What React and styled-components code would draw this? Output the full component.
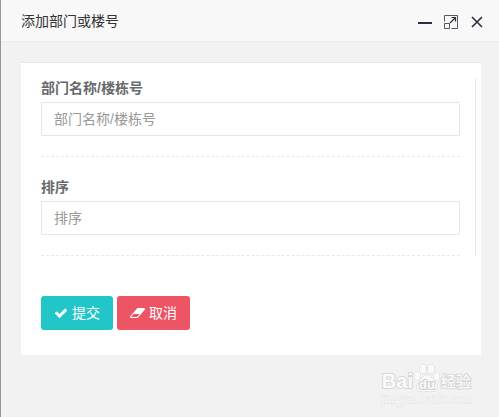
import React from "react";
import styled, { createGlobalStyle } from "styled-components";

const GlobalStyle = createGlobalStyle`
  *, *::before, *::after { box-sizing: border-box; }
  html { background: #f2f2f2; }
  body {
    margin: 0;
    font: 14px/20px "Liberation Sans", "Noto Sans CJK SC", sans-serif;
    color: #676a6c;
  }
`;

const Dialog = styled.main`
  position: relative;
  min-height: 100vh;
  border-left: 1px solid #999;
  background: #f2f2f2;
`;

const TitleBar = styled.header`
  display: flex;
  align-items: center;
  justify-content: space-between;
  height: 42px;
  padding: 0 14px 0 20px;
  background: #f8f8f8;
  border-bottom: 1px solid #eee;
`;

const Title = styled.h1`
  margin: 0;
  font-size: 14px;
  font-weight: 400;
  color: #333;
`;

const WindowControls = styled.div`
  display: flex;
  gap: 10px;
  padding-top: 2px;
`;

const WindowButton = styled.button`
  display: flex;
  padding: 0;
  border: 0;
  background: none;
  color: #2e2d3c;
  cursor: pointer;
`;

const Card = styled.form`
  margin: 20px 18px 0 20px;
  padding: 15px 5px 25px 20px;
  background: #fff;
  border-top: 1px solid #e7eaec;
`;

const Fields = styled.div`
  padding-right: 15px;
  border-right: 1px solid #e7e7e7;
`;

const Field = styled.div`
  display: flex;
  flex-direction: column;
  gap: 4px;
  padding-bottom: 20px;
  border-bottom: 1px dashed #e7eaec;

  & + & { padding-top: 20px; }
`;

const Label = styled.label`
  font-weight: 700;
`;

const TextInput = styled.input`
  width: 100%;
  height: 34px;
  padding: 6px 12px;
  border: 1px solid #e5e6e7;
  border-radius: 1px;
  background: #fff;
  font: inherit;
  color: inherit;

  &::placeholder { color: #999; opacity: 1; }
`;

const Actions = styled.div`
  display: flex;
  gap: 4px;
  margin-top: 40px;
`;

const ActionButton = styled.button`
  display: flex;
  align-items: center;
  gap: 4px;
  height: 34px;
  padding: 0 13px;
  border: 0;
  border-radius: 3px;
  background: ${({ $color }) => $color};
  color: #fff;
  font: inherit;
  cursor: pointer;
`;

const Watermark = styled.div`
  position: absolute;
  right: 28px;
  bottom: 12px;
  color: #fafafa;
  -webkit-text-stroke: 2px #d8d8d8;
  paint-order: stroke fill;
`;

const WatermarkBrand = styled.div`
  display: flex;
  align-items: flex-end;
  justify-content: flex-end;
  height: 31px;
  font: 700 20px/24px "Liberation Sans", sans-serif;
`;

const WatermarkName = styled.span`
  font: 500 15px/24px "Noto Sans CJK SC", sans-serif;
`;

const WatermarkUrl = styled.div`
  font: 12px/12px "Liberation Serif", serif;
  text-align: right;
  -webkit-text-stroke: 1px #e4e4e4;
`;

const PawText = styled.text`
  font: 700 13px "Liberation Sans", sans-serif;
  fill: #fafafa;
  stroke: #d0d0d0;
  stroke-width: 2px;
`;

const MinimizeIcon = () => (
  <svg width="16" height="16" viewBox="0 0 16 16" aria-hidden="true">
    <path d="M1 8h14v2H1z" fill="currentColor" />
  </svg>
);

const MaximizeIcon = () => (
  <svg width="16" height="16" viewBox="0 0 16 16" fill="none" stroke="currentColor" aria-hidden="true">
    <path d="M1.5 7.5v-6h13v13h-6M1.5 9.5h5v5h-5z" strokeOpacity="0.8" />
    <path d="M7 9l5.500-5.500M8.500 3.500h4v4" strokeWidth="1.200" />
  </svg>
);

const CloseIcon = () => (
  <svg width="16" height="16" viewBox="0 0 16 16" fill="none" stroke="currentColor" strokeWidth="1.600" aria-hidden="true">
    <path d="M3 3l10 10M13 3L3 13" />
  </svg>
);

const CheckIcon = () => (
  <svg width="14" height="14" viewBox="0 0 1792 1792" fill="currentColor" aria-hidden="true">
    <path d="M1671 566q0 40-28 68l-724 724-136 136q-28 28-68 28t-68-28l-136-136-362-362q-28-28-28-68t28-68l136-136q28-28 68-28t68 28l294 295 656-657q28-28 68-28t68 28l136 136q28 28 28 68z" />
  </svg>
);

const EraserIcon = () => (
  <svg width="15" height="14" viewBox="64 0 1920 1792" fill="currentColor" aria-hidden="true">
    <path d="M960 1408l336-384h-768l-336 384h768zm1013-1077q15 34 9.5 71.5t-30.5 65.5l-896 1024q-38 44-96 44h-768q-38 0-69.5-20.5t-47.5-54.5q-15-34-9.5-71.5t30.5-65.5l896-1024q38-44 96-44h768q38 0 69.5 20.5t47.5 54.500z" />
  </svg>
);

const PawIcon = () => (
  <svg width="28" height="30" viewBox="0 0 28 30" fill="#fafafa" stroke="#d4d4d4" aria-hidden="true">
    <ellipse cx="4.500" cy="13" rx="3" ry="4" />
    <ellipse cx="10" cy="6" rx="3.200" ry="4.500" />
    <ellipse cx="18" cy="6" rx="3.200" ry="4.500" />
    <ellipse cx="23.500" cy="13.500" rx="3" ry="4" />
    <path d="M14 12c-4 0-5 4-8 7s-3 9 2 9.500c3 .3 4-.5 6-.5s3 .8 6 .5c5-.5 5-6.500 2-9.500s-4-7-8-7z" />
    <PawText x="14" y="26" textAnchor="middle">du</PawText>
  </svg>
);

const FIELDS = [
  { id: "name", label: "部门名称/楼栋号" },
  { id: "sort", label: "排序" },
];

export default function App() {
  return (
    <>
      <GlobalStyle />
      <Dialog>
        <TitleBar>
          <Title>添加部门或楼号</Title>
          <WindowControls>
            <WindowButton type="button" aria-label="最小化"><MinimizeIcon /></WindowButton>
            <WindowButton type="button" aria-label="最大化"><MaximizeIcon /></WindowButton>
            <WindowButton type="button" aria-label="关闭"><CloseIcon /></WindowButton>
          </WindowControls>
        </TitleBar>
        <Card onSubmit={(event) => event.preventDefault()}>
          <Fields>
            {FIELDS.map(({ id, label }) => (
              <Field key={id}>
                <Label htmlFor={id}>{label}</Label>
                <TextInput id={id} name={id} type="text" placeholder={label} />
              </Field>
            ))}
          </Fields>
          <Actions>
            <ActionButton type="submit" $color="#23c6c8"><CheckIcon />提交</ActionButton>
            <ActionButton type="reset" $color="#ed5565"><EraserIcon />取消</ActionButton>
          </Actions>
        </Card>
        <Watermark>
          <WatermarkBrand>
            <span>Bai</span>
            <PawIcon />
            <WatermarkName>经验</WatermarkName>
          </WatermarkBrand>
          <WatermarkUrl>jingyan.baidu.com</WatermarkUrl>
        </Watermark>
      </Dialog>
    </>
  );
}
